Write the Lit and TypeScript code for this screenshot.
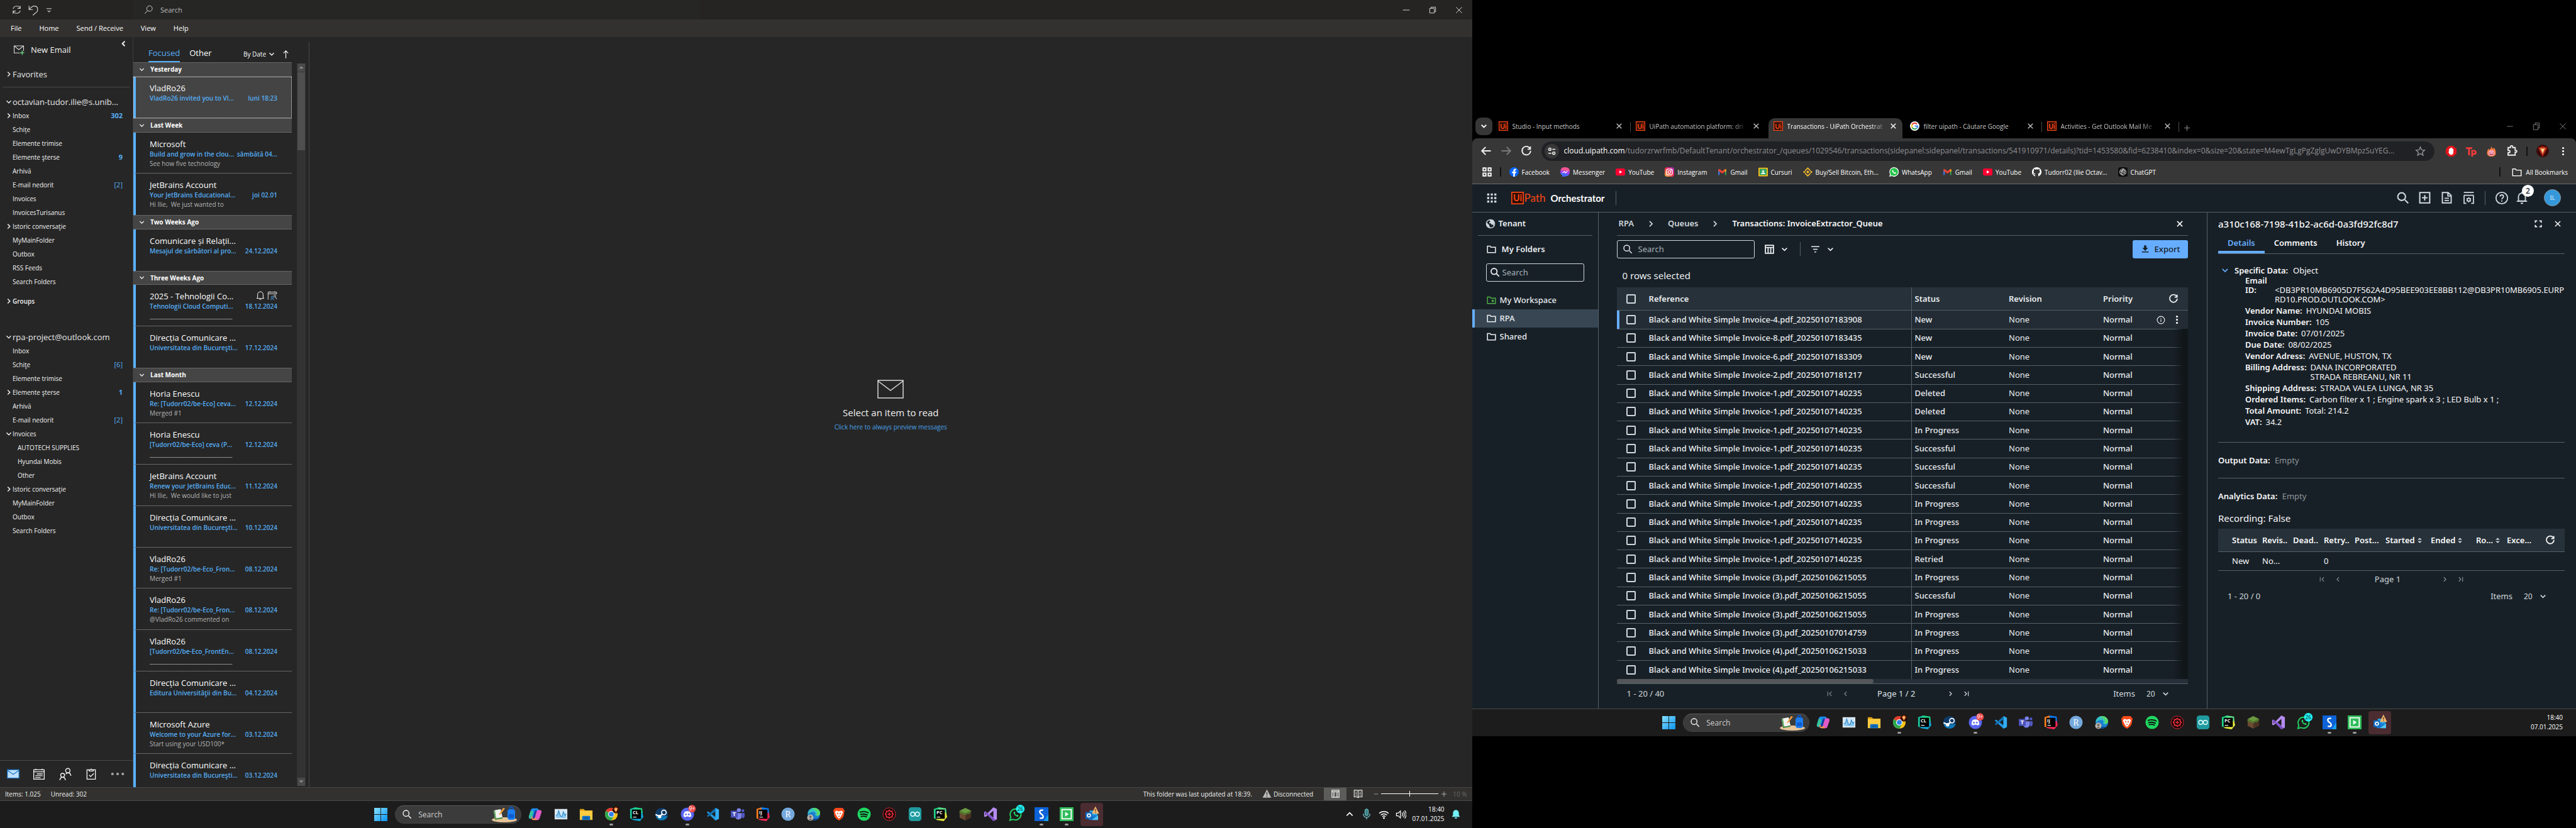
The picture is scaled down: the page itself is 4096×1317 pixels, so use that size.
import { LitElement, html, svg, css, nothing } from "lit";
import { customElement, property } from "lit/decorators.js";
import { classMap } from "lit/directives/class-map.js";

const ico = (body: unknown, size = 16, vb = "0 0 24 24") =>
  html`<svg class="ico" width=${size} height=${size} viewBox=${vb} fill="none" aria-hidden="true">${body}</svg>`;
const line = (d: string, size = 16, w = 2, vb = "0 0 24 24") =>
  ico(svg`<path d=${d} stroke="currentColor" stroke-width=${w}/>`, size, vb);
const solid = (d: string, size = 16) => ico(svg`<path d=${d} fill="currentColor" fill-rule="evenodd"/>`, size);

const DOWN = "M5 8.500l7 7 7-7";
const RIGHT = "M8.500 5l7 7-7 7";
const LEFT = "M15.500 5l-7 7 7 7";
const CROSS = "M5 5l14 14M19 5L5 19";
const LENS = "M16 16l6 6M10 3a7 7 0 1 0 0 14a7 7 0 0 0 0-14z";
const FOLDER = "M3 5h6l2 2.500h10v12H3z";
const RELOAD = "M19.500 6.500A9 9 0 1 0 21 12M20.500 2.500V8.500H14.500";

const reset = css`
  * { box-sizing: border-box; }
  button, input, select { font: inherit; color: inherit; background: none; border: 0; padding: 0; margin: 0; outline: 0; }
  a { color: inherit; text-decoration: none; }
  .ico { display: block; flex: none; }
  button { display: flex; align-items: center; justify-content: center; }
  ul, h1, h2, p, dl, dd { margin: 0; padding: 0; list-style: none; font-weight: inherit; font-size: inherit; }
`;

/* ---------- Taskbar ---------- */

const badgeAvatar = svg`<circle cx="20" cy="4.500" r="6" fill="#2a0d08"/><path d="M16 2.500l4-3 4 3-4 7z" fill="#e0641c"/><path d="M18 3l2-1.500L22 3l-2 4z" fill="#ffdc9a"/>`;
const jetbrains = (t: string, a: string, b: string, c: string) => svg`
  <path d="M1 3l9-3 3 8-6 14-6-3z" fill=${a}/><path d="M9 0l13 2 1 10-9 3z" fill=${b}/><path d="M4 17l18-8 2 8-6 7-12-2z" fill=${c}/>
  <rect x="4" y="4" width="16" height="16" fill="#000"/>
  <text x="5.500" y="12" font-size="8" font-weight="700" font-family="Open Sans, sans-serif" fill="#fff">${t}</text>
  <rect x="6" y="16.500" width="6" height="1.300" fill="#fff"/>`;

const apps: { name: string; art: unknown; dot?: boolean; active?: boolean }[] = [
  { name: "Copilot", art: svg`<path d="M8 2h7c2 0 2.500 1 3 2.500l1 3h-4c-1.500 0-2.300 1-2.800 2.500L9.500 18C9 19.500 8 20 6.500 20H3.500C1.500 20 .5 18 1.200 15.500L4.500 5C5 3 6 2 8 2z" fill="#1c8df0"/><path d="M1 15.500L4 6l5 1-3 13H3.500C1.500 20 .5 18 1 15.500z" fill="#35c39a"/><path d="M16 22H9c-2 0-2.500-1-3-2.500l-1-3h4c1.500 0 2.300-1 2.800-2.500L14.500 7C15 5.500 16 5 17.500 5h3c2 0 3 2 2.300 4.500L19.500 19c-.5 2-1.500 3-3.500 3z" fill="#e15ac8"/><path d="M6 19.500l-1-3h5l6 5.500H9c-2 0-2.500-1-3-2.500z" fill="#ff9248"/><path d="M10 10l2-5h3l-4 14-4 1z" fill="#173f9a"/>` },
  { name: "Resource monitor", art: svg`<rect x="1" y="3" width="22" height="18" fill="#e3e8ee"/><rect x="2.500" y="4.500" width="19" height="15" fill="#d2e8f7"/><path d="M3 18v-4l3-1 2-7 3 9 3 1 2-8 3 6 2-3v8z" fill="#8cc7ee"/><path d="M3 14l3-1 2-7 3 9 3 1 2-8 3 6 2-3" stroke="#2a86c9" stroke-width="1.200"/>` },
  { name: "File Explorer", art: svg`<path d="M1 3h7l2 2.500h13V9H1z" fill="#dd9c12"/><rect x="1" y="6" width="22" height="16" fill="#ffcc40"/><path d="M5 22v-5a2 2 0 0 1 2-2h10a2 2 0 0 1 2 2v5z" fill="#1273c4"/><rect x="8" y="18" width="8" height="1.500" fill="#0b4f91"/>` },
  { name: "Chrome", dot: true, art: svg`<circle cx="12" cy="12" r="11" fill="#fbc116"/><path d="M12 12L2.500 6.500A11 11 0 0 1 21.500 6.500H12z" fill="#e33b2e"/><path d="M12 12L2.500 6.500A11 11 0 0 0 12 23l5-8.500z" fill="#2da94f"/><circle cx="12" cy="12" r="5.500" fill="#fff"/><circle cx="12" cy="12" r="4.200" fill="#2f7de9"/>${badgeAvatar}` },
  { name: "CLion", art: jetbrains("CL", "#18c9a0", "#21d789", "#10a9d8") },
  { name: "Steam", art: svg`<circle cx="12" cy="12" r="11" fill="#0e3a68"/><path d="M1.500 15A11 11 0 0 0 22.500 15z" fill="#1276b5"/><circle cx="16" cy="9" r="4" stroke="#fff" stroke-width="1.800"/><circle cx="8.500" cy="16" r="3" fill="#fff"/><path d="M1.500 12.500L9 16l5-5" stroke="#fff" stroke-width="2.500"/>` },
  { name: "Discord", dot: true, art: svg`<circle cx="12" cy="12" r="11.500" fill="#5865f2"/><path d="M7.500 7.500q4.500-1.500 9 0 2.500 3.500 2.500 8l-3.500 2-1-1.500h-5l-1 1.500-3.500-2q0-4.500 2.500-8z" fill="#fff"/><circle cx="9.500" cy="12.500" r="1.500" fill="#5865f2"/><circle cx="14.500" cy="12.500" r="1.500" fill="#5865f2"/><circle cx="20" cy="2.500" r="6.500" fill="#ee4b4b"/><text x="20" y="5.500" text-anchor="middle" font-size="9" font-family="Open Sans, sans-serif" fill="#fff">9+</text>` },
  { name: "Visual Studio Code", art: svg`<path d="M17 1l6 3v16l-6 3L2 9l2-2 13 10z" fill="#2196e0"/><path d="M17 1l6 3v16l-6 3z" fill="#33adf5"/><path d="M17 1v6L4 17l-2-2z" fill="#1170b0"/>` },
  { name: "Teams", art: svg`<circle cx="14" cy="5" r="3.500" fill="#7b83eb"/><circle cx="21" cy="6" r="2.500" fill="#5059c9"/><path d="M8 10h11v7a6 6 0 0 1-11 1z" fill="#7b83eb"/><path d="M19 10h5v6q-1 3-4 3z" fill="#5059c9"/><rect x="0" y="6" width="12" height="12" rx="1" fill="#4b53bc"/><text x="6" y="15.500" text-anchor="middle" font-size="10" font-weight="700" font-family="Open Sans, sans-serif" fill="#fff">T</text>` },
  { name: "IntelliJ IDEA", art: jetbrains("IJ", "#fc801d", "#087cfa", "#fe2857") },
  { name: "R", art: svg`<circle cx="12" cy="12" r="11.500" fill="#75a9dc"/><text x="12" y="17.500" text-anchor="middle" font-size="15" font-family="Liberation Serif, serif" fill="#fff">R</text>` },
  { name: "Edge", art: svg`<circle cx="12" cy="12" r="11" fill="#1a7fd1"/><path d="M2 9C4 3 9 1 13 1c6 0 10 5 10 9 0 3-3 5-6 5s-3-2-2-4c0-2-2-3-4-3-4 0-8 2-9 5z" fill="#36c4c0"/><path d="M13 1c6 0 10 5 10 9 0 3-3 5-6 5 2-5 0-11-9-13z" fill="#57d96b"/><path d="M8 12c0 7 6 9 12 7-3 4-7 5-11 3s-4-6-1-10z" fill="#0d4d94"/><circle cx="6" cy="18" r="5.500" fill="#b9b4ae"/><circle cx="6" cy="16.500" r="2" fill="#6b625c"/><path d="M3 22q3-5 6 0z" fill="#6b625c"/>` },
  { name: "Brave", art: svg`<path d="M6 1h12l2 2 2 3-1 3c0 7-3 11-9 14C6 20 3 16 3 9L2 6l2-3z" fill="#fb4a1c"/><path d="M7 6l5 1 5-1 2 3-2 4-2 4-3 3-3-3-2-4-2-4z" fill="#fff"/><path d="M8 9l3 1-1 3zM16 9l-3 1 1 3zM10 15h4l-2 2z" fill="#fb4a1c"/>` },
  { name: "Spotify", art: svg`<circle cx="12" cy="12" r="11.500" fill="#1ed760"/><path d="M5 8.500q8-2.500 14 1M6 12.500q6.500-2 11.500 1M7 16q5-1.500 9 .8" stroke="#101010" stroke-width="2" stroke-linecap="round"/>` },
  { name: "Game launcher", art: svg`<circle cx="12" cy="12" r="11" fill="#160708" stroke="#e02a34" stroke-width="1"/><path d="M12 5l2 2 3 0 0 3 2 2-2 2 0 3-3 0-2 2-2-2-3 0 0-3-2-2 2-2 0-3 3 0z" stroke="#ee2f3a" stroke-width="1.800"/><path d="M12 9v6M9 12h6" stroke="#ee2f3a" stroke-width="1.500"/>` },
  { name: "Arduino", art: svg`<rect x="1" y="0" width="22" height="24" rx="5" fill="#1f9a9f"/><circle cx="8" cy="12" r="3.500" stroke="#e9ffff" stroke-width="1.500"/><circle cx="16" cy="12" r="3.500" stroke="#e9ffff" stroke-width="1.500"/>` },
  { name: "PyCharm", art: jetbrains("PC", "#21d789", "#5ee08a", "#e8ea3c") },
  { name: "Minecraft", art: svg`<path d="M12 1l10 5-10 5L2 6z" fill="#6a9a3f"/><path d="M2 6l10 5v12L2 18z" fill="#6b4a31"/><path d="M22 6l-10 5v12l10-5z" fill="#4a3122"/><path d="M2 6l10 5v3l-3-2-2 1-2-3-3 1zM22 6l-10 5v3l4-3 2 1 4-4z" fill="#4f7a2c"/>` },
  { name: "Visual Studio", art: svg`<path d="M17 0l6 3v18l-6 3L7 14l-4 3-2-1V8l2-1 4 3z" fill="#b58cf0"/><path d="M17 6v12l-7-6z" fill="#1c1c1c"/><path d="M3 10v4l2-2z" fill="#1c1c1c"/><path d="M1 8l2-1 18 15-4 2z" fill="#7d4fc9"/>` },
  { name: "WhatsApp", art: svg`<path d="M12 3a9.500 9.500 0 1 1-4.500 18L2 22.500 3.500 17A9.500 9.500 0 0 1 12 3z" stroke="#25d366" stroke-width="2"/><path d="M8.500 8q-1 3 2 6t6 2l.5-2-2.500-1-1 1q-2-1-3-3l1-1-1-2.500z" fill="#25d366"/><circle cx="20" cy="3" r="7.500" fill="#1ff4f4"/><text x="20" y="6.500" text-anchor="middle" font-size="9" font-family="Open Sans, sans-serif" fill="#10282c">26</text>` },
  { name: "Scribe", dot: true, art: svg`<rect x="0" y="0" width="24" height="24" fill="#0d63d8"/><path d="M16 24l8-12v12z" fill="#16a0f0"/><path d="M15 5H12a3 3 0 0 0-3 3q0 2 3 4t3 4a3 3 0 0 1-3 3H9" stroke="#fff" stroke-width="2.600"/>` },
  { name: "UiPath Assistant", dot: true, art: svg`<rect x="0" y="0" width="24" height="24" fill="#2ebd59"/><rect x="4" y="4" width="16" height="16" stroke="#fff" stroke-width="2"/><path d="M9.500 8l6 4-6 4z" fill="#fff"/>` },
  { name: "Outlook", active: true, art: svg`<rect x="8" y="5" width="15" height="12" fill="#28a8ea"/><path d="M6 14h18v9H6z" fill="#1a7ad0"/><path d="M24 14L12 23h12z" fill="#50c3f5"/><rect x="0" y="8" width="13" height="13" rx="1" fill="#0f6cc4"/><circle cx="6.500" cy="14.500" r="3" stroke="#fff" stroke-width="2"/><path d="M19-3l7 14H12z" fill="#f3b56b"/><path d="M19 2v5M19 8.500v1" stroke="#4a3320" stroke-width="1.500"/>` },
];

@customElement("task-bar")
class TaskBar extends LitElement {
  @property({ type: Boolean }) tray = false;

  static styles = [reset, css`
    :host { display: grid; grid-template-columns: 1fr auto 1fr; height: 44px; background: #1c1c1c; border-top: 1px solid #474747; font: 10px/15px "Open Sans", sans-serif; color: #fff; }
    .group { display: flex; align-items: center; padding-left: 9px; grid-column: 2; }
    .start { margin-right: 12px; }
    .search { display: flex; align-items: center; gap: 10px; width: 201px; height: 29px; border-radius: 15px; background: #3b3b3b; border: 1px solid #434343; border-top-color: #5c5c5c; padding: 0 5px 0 10px; margin-right: 4px; }
    .search input { flex: 1; min-width: 0; font-size: 12px; color: #fff; }
    .search input::placeholder { color: #cfcfcf; opacity: 1; }
    .apps { display: flex; justify-content: space-between; width: 921px; }
    .app { position: relative; width: 36px; height: 37px; border-radius: 4px; }
    .app .ico { overflow: visible; }
    .active { background: #4a2c31; }
    .dot::after { content: ""; position: absolute; bottom: 1px; left: 15px; width: 6px; height: 3px; border-radius: 2px; background: #9a9a9a; }
    .tray { display: flex; align-items: center; justify-content: flex-end; padding-right: 21px; gap: 12px; }
    .full { padding-right: 18px; gap: 10px; }
    .clock { text-align: right; }
  `];

  render() {
    return html`
      <div class="group">
        <button class="start" aria-label="Start">${ico(svg`<defs><linearGradient id="w" x1="0" y1="0" x2="1" y2="1" ><stop stop-color="#86e0ff"/><stop offset="1" stop-color="#0a94f2"/></linearGradient></defs><path d="M0 0h11.500v11.500H0zM12.500 0H24v11.500H12.500zM0 12.500h11.500V24H0zM12.500 12.500H24V24H12.500z" fill="url(#w)"/>`, 21)}</button>
        <label class="search">
          ${line(LENS, 16, 2)}
          <input type="search" placeholder="Search" aria-label="Search" />
          ${html`<svg class="ico" width="42" height="26" viewBox="0 0 42 26" aria-hidden="true"><ellipse cx="21" cy="22" rx="20" ry="4" fill="#e8c598"/><path d="M4 7l11-2 3 13-12 2z" fill="#f2f2ee"/><path d="M4 7l2 13 2 0-2-13z" fill="#55a552"/><path d="M6 20l12-2v2l-12 2z" fill="#3f8a44"/><path d="M12 14l7-11 3 1-8 10z" fill="#f2a03d"/><rect x="26" y="5" width="12" height="17" rx="4" fill="#1b7df0"/><path d="M29 6q0-4 3-4t3 4" stroke="#0b57c4" stroke-width="2" fill="none"/><rect x="28" y="13" width="8" height="6" rx="1" fill="#0c5bd0"/></svg>`}
        </label>
        <div class="apps">
          ${apps.map((a) => html`<button class=${classMap({ app: true, dot: !!a.dot, active: !!a.active })} aria-label=${a.name}>${ico(a.art, a.name === "Outlook" ? 20 : 22)}</button>`)}
        </div>
      </div>
      <div class=${classMap({ tray: true, full: this.tray })}>
        ${this.tray ? html`
          ${line("M5 15.500l7-7 7 7", 16, 2.5)}
          ${ico(svg`<rect x="8.500" y="1" width="7" height="14" rx="3.500" fill="#3a7f85" stroke="#7fe3ea" stroke-width="1.200"/><path d="M5 11v1a7 7 0 0 0 14 0v-1M12 19v4" stroke="#7fe3ea" stroke-width="1.500"/>`, 18)}
          ${ico(svg`<path d="M1.500 9.500a15 15 0 0 1 21 0M5 13.500a10 10 0 0 1 14 0M8.500 17a5 5 0 0 1 7 0" stroke="#fff" stroke-width="2"/><circle cx="12" cy="20" r="2" fill="#fff"/>`, 17)}
          ${line("M2 9v6h4l5 5V4L6 9zM14.500 8q3 4 0 8M17.500 5.500q5 6.500 0 13M20.500 3q7 9 0 18", 17, 1.7)}` : nothing}
        <time class="clock">18:40<br />07.01.2025</time>
        ${this.tray ? ico(svg`<path d="M12 2a7 7 0 0 0-7 7v5l-2.500 4.500h19L19 14V9a7 7 0 0 0-7-7zM9 20a3 3 0 0 0 6 0z" fill="#74f0f7"/>`, 16) : nothing}
      </div>`;
  }
}

/* ---------- Outlook ---------- */

type Folder = { name: string; count?: string; bold?: boolean; open?: boolean; closed?: boolean; child?: boolean };
const boxA: Folder[] = [
  { name: "Inbox", count: "302", bold: true, closed: true }, { name: "Schițe" }, { name: "Elemente trimise" },
  { name: "Elemente şterse", count: "9", bold: true }, { name: "Arhivă" }, { name: "E-mail nedorit", count: "[2]" },
  { name: "Invoices" }, { name: "InvoicesTurisanus" }, { name: "Istoric conversaţie", closed: true },
  { name: "MyMainFolder" }, { name: "Outbox" }, { name: "RSS Feeds" }, { name: "Search Folders" },
];
const boxB: Folder[] = [
  { name: "Inbox" }, { name: "Schiţe", count: "[6]" }, { name: "Elemente trimise" },
  { name: "Elemente şterse", count: "1", bold: true, closed: true }, { name: "Arhivă" }, { name: "E-mail nedorit", count: "[2]" },
  { name: "Invoices", open: true }, { name: "AUTOTECH SUPPLIES", child: true }, { name: "Hyundai Mobis", child: true },
  { name: "Other", child: true }, { name: "Istoric conversaţie", closed: true }, { name: "MyMainFolder" },
  { name: "Outbox" }, { name: "Search Folders" },
];

const RULE = "_".repeat(30);
type Mail = { from: string; subject: string; date: string; preview?: string; meeting?: boolean; selected?: boolean; cut?: boolean };
const groups: { title: string; mails: Mail[] }[] = [
  { title: "Yesterday", mails: [{ from: "VladRo26", subject: "VladRo26 invited you to Vl...", date: "luni 18:23", selected: true }] },
  { title: "Last Week", mails: [
    { from: "Microsoft", subject: "Build and grow in the clou...", date: "sâmbătă 04...", preview: "See how five technology" },
    { from: "JetBrains Account", subject: "Your JetBrains Educational...", date: "joi 02.01", preview: "Hi Ilie,  We just wanted to" }] },
  { title: "Two Weeks Ago", mails: [{ from: "Comunicare și Relații...", subject: "Mesajul de sărbători al pro...", date: "24.12.2024" }] },
  { title: "Three Weeks Ago", mails: [
    { from: "2025 - Tehnologii Co...", subject: "Tehnologii Cloud Computi...", date: "18.12.2024", preview: RULE, meeting: true },
    { from: "Direcția Comunicare ...", subject: "Universitatea din Bucureşti...", date: "17.12.2024" }] },
  { title: "Last Month", mails: [
    { from: "Horia Enescu", subject: "Re: [Tudorr02/be-Eco] ceva...", date: "12.12.2024", preview: "Merged #1" },
    { from: "Horia Enescu", subject: "[Tudorr02/be-Eco] ceva (P...", date: "12.12.2024", preview: RULE },
    { from: "JetBrains Account", subject: "Renew your JetBrains Educ...", date: "11.12.2024", preview: "Hi Ilie,  We would like to just" },
    { from: "Direcția Comunicare ...", subject: "Universitatea din Bucureşti...", date: "10.12.2024" },
    { from: "VladRo26", subject: "Re: [Tudorr02/be-Eco_Fron...", date: "08.12.2024", preview: "Merged #1" },
    { from: "VladRo26", subject: "Re: [Tudorr02/be-Eco_Fron...", date: "08.12.2024", preview: "@VladRo26 commented on" },
    { from: "VladRo26", subject: "[Tudorr02/be-Eco_FrontEn...", date: "08.12.2024", preview: RULE },
    { from: "Direcția Comunicare ...", subject: "Editura Universităţii din Bu...", date: "04.12.2024" },
    { from: "Microsoft Azure", subject: "Welcome to your Azure for...", date: "03.12.2024", preview: "Start using your USD100*" },
    { from: "Direcția Comunicare ...", subject: "Universitatea din Bucureşti...", date: "03.12.2024", cut: true }] },
];

@customElement("outlook-window")
class OutlookWindow extends LitElement {
  static styles = [reset, css`
    :host { display: flex; flex-direction: column; min-height: 0; background: #262626; color: #fff; font: 10px/14px "Open Sans", sans-serif; }
    .title { display: flex; align-items: center; height: 31px; background: #252423; color: #d0d0d0; padding: 0 13px 0 18px; }
    .quick { display: flex; align-items: center; gap: 9px; width: 194px; }
    .find { display: flex; align-items: center; gap: 11px; height: 31px; width: 900px; background: #262625; padding-left: 17px; }
    .find input { font-size: 11px; color: #d0d0d0; }
    .find input::placeholder { color: #bdbdbd; opacity: 1; }
    .win { display: flex; gap: 26px; margin-left: auto; }
    .menu { display: flex; align-items: center; gap: 28px; height: 28px; background: #32312f; padding-left: 17px; font-size: 11px; }
    .body { display: flex; flex: 1; min-height: 0; }
    .nav { display: flex; flex-direction: column; width: 212px; border-right: 1px solid #3d3d3d; color: #f3f3f3; }
    .new { display: flex; align-items: center; justify-content: flex-start; gap: 10px; height: 40px; padding: 0 8px 0 21px; font-size: 13px; }
    .collapse { margin: -20px 0 0 auto; }
    .head { display: flex; align-items: center; font-size: 13px; height: 22px; padding-left: 8px; color: #e6e6e6; }
    .fav { margin-top: 8px; }
    .rule { height: 1px; background: #484848; margin: 9px 5px 12px; }
    .row { display: flex; align-items: center; height: 22px; padding: 0 16px 0 8px; }
    .child { padding-left: 16px; }
    .slot { width: 12px; flex: none; }
    .count { margin-left: auto; color: #55aef5; font-size: 11px; }
    .bold { font-weight: 700; }
    .groups { margin: 9px 0 35px; font-weight: 600; }
    .bottom { display: flex; align-items: center; justify-content: space-between; height: 43px; margin-top: auto; border-top: 1px solid #4a4a4a; padding: 0 13px 0 11px; }
    .list { display: flex; flex-direction: column; width: 252px; }
    .tabs { display: flex; align-items: flex-end; gap: 15px; height: 40px; padding: 0 2px 0 24px; font-size: 13px; }
    .tab { height: 28px; border-bottom: 2px solid transparent; line-height: 16px; align-items: center; }
    .on { color: #55aef5; border-color: #55aef5; }
    .order { display: flex; align-items: center; gap: 9px; height: 26px; margin-left: auto; }
    .sort { gap: 3px; font-size: 10px; }
    .mails { display: flex; flex-direction: column; flex: 1; min-height: 0; }
    .group { display: flex; align-items: center; gap: 8px; flex: 0 1 23px; min-height: 0; background: #454545; border-top: 1px solid #666; border-bottom: 1px solid #666; padding-left: 8px; font-weight: 700; }
    .mail { display: grid; grid-template-columns: 137px 1fr; grid-template-rows: 18px 15px 14px; flex: 0 1 66px; min-height: 0; overflow: hidden; padding: 9px 23px 0 22px; border-left: 4px solid #58b0fb; border-bottom: 1px solid #666; }
    .mail.last { border-bottom: 0; }
    .cut { flex-basis: 53px; border-bottom: 0; }
    .selected { background: #444; outline: 1px dotted #e0e0e0; outline-offset: -1px; }
    .from { font-size: 13px; line-height: 18px; white-space: nowrap; }
    .flags { display: flex; justify-content: flex-end; gap: 3px; }
    .subject, .date { color: #55aef5; font-weight: 600; white-space: nowrap; }
    .date { text-align: right; }
    .preview { color: #b4b4b4; white-space: pre; }
    .scroll { display: flex; flex-direction: column; width: 14px; margin: 42px 5px 2px 8px; background: #333; }
    .arrow { height: 13px; margin: 0 1px; background: #4a4a4a; color: #8f8f8f; }
    .thumb { height: 124px; margin: 1px 1px auto; background: #4f4f4f; }
    .read { display: flex; flex: 1; flex-direction: column; align-items: center; justify-content: center; border-left: 1px solid #484848; margin-top: 8px; padding-bottom: 29px; }
    .read h2 { font-size: 15px; line-height: 20px; margin-top: 12px; color: #f0f0f0; }
    .read a { color: #49a3ea; margin-top: 6px; }
    .status { display: flex; align-items: center; height: 21px; background: #32312f; border-top: 1px solid #444; padding: 0 8px; color: #f0f0f0; }
    .status > span { margin-right: 16px; }
    .status > .fresh { margin: 0 16px 0 auto; }
    .offline { display: flex; align-items: center; gap: 3px; margin-right: 17px; }
    .view { width: 36px; height: 20px; }
    .lit { background: #5c5c5a; }
    .zoom { display: flex; align-items: center; gap: 3px; margin-left: 6px; color: #aaa; }
    .zoom input { appearance: none; width: 91px; height: 11px; background: linear-gradient(#fff, #fff) center / 100% 1px no-repeat; }
    .zoom input::-webkit-slider-thumb { appearance: none; width: 1px; height: 9px; background: #fff; }
    .pct { color: #666; margin-left: 5px; }
  `];

  folder(f: Folder) {
    return html`<a href="#" class=${classMap({ row: true, child: !!f.child })}>
      <span class="slot">${f.closed ? line(RIGHT, 12, 3) : f.open ? line(DOWN, 12, 3) : nothing}</span>
      <span>${f.name}</span>
      ${f.count ? html`<span class=${classMap({ count: true, bold: !!f.bold })}>${f.count}</span>` : nothing}
    </a>`;
  }

  mail(m: Mail, last: boolean) {
    return html`<article class=${classMap({ mail: true, selected: !!m.selected, cut: !!m.cut, last })}>
      <span class="from">${m.from}</span>
      <span class="flags">${m.meeting ? html`
        ${line("M12 3a6.500 6.500 0 0 0-6.500 6.500v7L3.500 19h17l-2-2.500v-7A6.500 6.500 0 0 0 12 3zM10 21.500h4", 16, 1.5)}
        ${ico(svg`<path d="M2 22V4h20v5M2 8h20M6 2v3M18 2v3" stroke="#ddd" stroke-width="1.500"/><circle cx="18" cy="13" r="2.300" stroke="#ddd" stroke-width="1.300"/><circle cx="12" cy="16" r="2.500" stroke="#49a3ea" stroke-width="1.500"/><path d="M8 23q4-8 8 0" stroke="#49a3ea" stroke-width="1.500"/><path d="M18 16q4 0 4 5" stroke="#ddd" stroke-width="1.300"/>`, 16)}` : nothing}</span>
      <span class="subject">${m.subject}</span><span class="date">${m.date}</span>
      <span class="preview">${m.preview ?? ""}</span>
    </article>`;
  }

  render() {
    return html`
      <header class="title">
        <div class="quick">
          ${line("M4 10a8.500 8.500 0 0 1 16-1M20 3v6h-6M20 14a8.500 8.500 0 0 1-16 1M4 21v-6h6", 17, 1.6)}
          ${line("M3 3v8h8M3.500 11Q9 3 15 3.500t6 6.500-3 7l-7 6", 18, 1.6)}
          ${line("M5 8h14M8 13l4 4 4-4", 14, 1.8)}
        </div>
        <label class="find">${line("M14 2a7 7 0 1 0 0 14a7 7 0 0 0 0-14zM9 14l-7 8", 15, 1.6)}<input type="search" placeholder="Search" aria-label="Search" /></label>
        <div class="win">
          <button aria-label="Minimize">${line("M4 12h16", 16, 1.5)}</button>
          <button aria-label="Restore">${line("M5 8h11v11H5zM8 8V5h11v11h-3", 16, 1.5)}</button>
          <button aria-label="Close">${line(CROSS, 16, 1.5)}</button>
        </div>
      </header>
      <nav class="menu">${["File", "Home", "Send / Receive", "View", "Help"].map((t) => html`<button>${t}</button>`)}</nav>
      <div class="body">
        <nav class="nav">
          <button class="new">${ico(svg`<path d="M2 4h20v11M14 19H2V4l10 8L22 4" stroke="#ddd" stroke-width="1.400"/><path d="M19 14v9M14.500 18.500h9" stroke="#6fdc8c" stroke-width="1.800"/>`, 18)}New Email<span class="collapse">${line(LEFT, 13, 3.5)}</span></button>
          <div class="head fav">${line(RIGHT, 12, 3)}Favorites</div>
          <div class="rule"></div>
          <div class="head">${line(DOWN, 12, 3)}octavian-tudor.ilie@s.unib...</div>
          ${boxA.map((f) => this.folder(f))}
          <div class="groups">${this.folder({ name: "Groups", closed: true })}</div>
          <div class="head">${line(DOWN, 12, 3)}rpa-project@outlook.com</div>
          ${boxB.map((f) => this.folder(f))}
          <div class="bottom">
            <button aria-label="Mail">${ico(svg`<rect x="1" y="4" width="22" height="16" fill="#bfdff8" stroke="#1a77c9" stroke-width="1.500"/><path d="M1 5l11 8 11-8" stroke="#1a77c9" stroke-width="1.500"/>`, 20)}</button>
            <button aria-label="Calendar">${line("M2 4h20v18H2zM2 8h20M6 2v3M18 2v3M8 12h11M5 15.500h14M5 19h10", 20, 1.6)}</button>
            <button aria-label="People">${line("M7.500 11.500a3.500 3.500 0 1 0 0 7a3.500 3.500 0 1 0 0-7M2.500 24q.5-5.500 5-5.500t5 5.500M17 2.500a4 4 0 1 0 0 8a4 4 0 1 0 0-8M13 13q2-2.500 4-2.500 5 0 5.500 5.500", 21, 1.6)}</button>
            <button aria-label="Tasks">${line("M9 4H4v18h16V4h-5M8 6.500V4h2.500q1.500-3 3 0H16v2.500zM8 14l3 3 6-6", 20, 1.6)}</button>
            <button aria-label="More">${ico(svg`<circle cx="3" cy="12" r="2.300" fill="#a8a8a8"/><circle cx="12" cy="12" r="2.300" fill="#a8a8a8"/><circle cx="21" cy="12" r="2.300" fill="#a8a8a8"/>`, 22)}</button>
          </div>
        </nav>
        <section class="list">
          <div class="tabs">
            <button class="tab on">Focused</button><button class="tab">Other</button>
            <div class="order"><button class="sort">By Date ${line(DOWN, 12, 2.5)}</button><button aria-label="Sort order">${line("M12 22V3M6 9l6-6 6 6", 15, 1.8)}</button></div>
          </div>
          <div class="mails">
            ${groups.map((g) => html`<h2 class="group">${line(DOWN, 11, 2.8)}${g.title}</h2>${g.mails.map((m, i) => this.mail(m, i === g.mails.length - 1))}`)}
          </div>
        </section>
        <div class="scroll">
          <div class="arrow">${ico(svg`<path d="M5 16h14l-7-7z" fill="currentColor"/>`, 12)}</div>
          <div class="thumb"></div>
          <div class="arrow">${ico(svg`<path d="M5 9h14l-7 7z" fill="currentColor"/>`, 12)}</div>
        </div>
        <main class="read">
          <svg class="ico" width="42" height="30" viewBox="0 0 42 30" fill="none" stroke="#d8d8d8" stroke-width="1.500" aria-hidden="true"><path d="M1 1h40v28H1zM1 2l20 15L41 2"/></svg>
          <h2>Select an item to read</h2>
          <a href="#">Click here to always preview messages</a>
        </main>
      </div>
      <footer class="status">
        <span>Items: 1.025</span><span>Unread: 302</span>
        <span class="fresh">This folder was last updated at 18:39.</span>
        <div class="offline">${ico(svg`<path d="M12 1l11 21H1z" fill="#bbb"/><path d="M12 8v7M12 17v3" stroke="#32312f" stroke-width="2"/>`, 15)}Disconnected</div>
        <button class="view lit" aria-label="Normal view">${line("M3 3h18v18H3zM3 7h18M8 7v14M16 7v14", 15, 2)}</button>
        <button class="view" aria-label="Reading view">${line("M12 4v18M2 3h8l2 2 2-2h8v17h-8l-2 2-2-2H2zM5 8h4M5 12h4M5 16h4M15 8h4M15 12h4M15 16h4", 15, 1.8)}</button>
        <div class="zoom">${line("M4 12h16", 10, 2)}<input type="range" aria-label="Zoom" />${line("M4 12h16M12 4v16", 12, 2)}<span class="pct">10 %</span></div>
      </footer>
      <task-bar tray></task-bar>`;
  }
}

/* ---------- Browser ---------- */

const uiFav = svg`<rect x="1" y="1" width="22" height="22" fill="#2a0d05" stroke="#fa4616" stroke-width="2"/><text x="12" y="18.500" text-anchor="middle" font-size="17" font-family="Lato, sans-serif" font-weight="700" fill="#fa4616">Ui</text>`;
const googleFav = svg`<circle cx="12" cy="12" r="12" fill="#fff"/><path d="M18 7.500A7.500 7.500 0 0 0 5.500 8.500" stroke="#ea4335" stroke-width="3.300"/><path d="M5.500 8.500a7.500 7.500 0 0 0 0 7" stroke="#fbbc05" stroke-width="3.300"/><path d="M5.500 15.500a7.500 7.500 0 0 0 11.500 2" stroke="#34a853" stroke-width="3.300"/><path d="M17 17.500q2.500-2 2.500-5.500H12" stroke="#4285f4" stroke-width="3.300"/>`;
const gmail = svg`<path d="M2 20V6l3 2v12z" fill="#4285f4"/><path d="M22 20V6l-3 2v12z" fill="#34a853"/><path d="M2 6q1-3 4-1l6 5 6-5q3-2 4 1v3L12 16 2 9z" fill="#ea4335"/><path d="M19 5q3 0 3 2v3l-3 2z" fill="#fbbc04"/>`;
const youtube = svg`<rect x="0" y="3" width="24" height="18" rx="4" fill="#ff0033"/><path d="M9.500 8l7 4-7 4z" fill="#fff"/>`;

const browserTabs = [
  { title: "Studio - Input methods", art: uiFav },
  { title: "UiPath automation platform: dri", art: uiFav, fade: true },
  { title: "Transactions - UiPath Orchestrat", art: uiFav, active: true, fade: true },
  { title: "filter uipath - Căutare Google", art: googleFav },
  { title: "Activities - Get Outlook Mail Me", art: uiFav, fade: true },
];

const bookmarks = [
  { t: "Facebook", a: svg`<circle cx="12" cy="12" r="12" fill="#0866ff"/><path d="M10 24v-9H7v-4h3V9q0-5 5-5h2.500v3.500H16q-2 0-2 2V11h3.500l-.6 4H14v9z" fill="#fff"/>` },
  { t: "Messenger", a: svg`<path d="M12 0q12 0 12 11.500T12 23l-3 0-4 1.500V20Q0 17 0 11.500 0 0 12 0z" fill="#a040f0"/><path d="M1 8Q3 0 12 0q11 0 12 10z" fill="#f2568f"/><path d="M0 14q2 6 5 6v4l4-1q9 1 12-5z" fill="#3d6bfa"/><path d="M5 15l5-5 4 3 5-4-5 6-4-3z" fill="#fff" stroke="#fff"/>` },
  { t: "YouTube", a: youtube },
  { t: "Instagram", a: svg`<defs><linearGradient id="ig" x1="0" y1="1" x2="1" y2="0"><stop stop-color="#fdc33d"/><stop offset=".5" stop-color="#f5284b"/><stop offset="1" stop-color="#a22bd0"/></linearGradient></defs><rect width="24" height="24" rx="6" fill="url(#ig)"/><rect x="4.500" y="4.500" width="15" height="15" rx="4.500" stroke="#fff" stroke-width="2"/><circle cx="12" cy="12" r="3.500" stroke="#fff" stroke-width="2"/><circle cx="16.500" cy="7.500" r="1.200" fill="#fff"/>` },
  { t: "Gmail", a: gmail },
  { t: "Cursuri", a: svg`<rect x="0" y="1" width="24" height="22" rx="2" fill="#f6bb17"/><rect x="3" y="4" width="18" height="16" fill="#2fa463"/><circle cx="12" cy="10" r="2.500" fill="#fff"/><path d="M6 17q1-4 6-4t6 4z" fill="#fff"/>` },
  { t: "Buy/Sell Bitcoin, Eth...", a: svg`<path d="M12 0l5 5-2 2-3-3-3 3-2-2zM12 24l5-5-2-2-3 3-3-3-2 2zM0 12l3-3 3 3-3 3zM24 12l-3-3-3 3 3 3zM12 8l4 4-4 4-4-4zM5 7l2-2 2 2-4 4zM19 7l-2-2-2 2 4 4zM5 17l2 2 2-2-4-4zM19 17l-2 2-2-2 4-4z" fill="#f3ba2f"/>` },
  { t: "WhatsApp", a: svg`<path d="M12 0a12 12 0 1 1-5.500 22.500L0 24l2-6A12 12 0 0 1 12 0z" fill="#fff"/><path d="M12 2a10 10 0 1 1-5 18.500L3 21.500 4 18A10 10 0 0 1 12 2z" fill="#25c34a"/><path d="M8 7q-2 3 2 7t7 2l.5-2-3-1.500-1 1.500q-2-1-3.500-3.500l1-1L9.500 7z" fill="#fff"/>` },
  { t: "Gmail", a: gmail },
  { t: "YouTube", a: youtube },
  { t: "Tudorr02 (Ilie Octav...", a: svg`<path d="M12 0a12 12 0 0 0-4 23.400v-4q-3 .6-4-1.800c-.5-1-1-1.400-1.500-1.800 1.500-.5 2.500 1.500 3.500 2 1 .4 1.700.2 2.200 0q.2-1 .8-1.500C5.500 16 4 14 4 11q0-2 1.200-3.200-.5-1.500.1-3.300 1.500 0 3.300 1.300 3.400-.9 6.800 0 1.800-1.300 3.300-1.300.6 1.800.1 3.300Q20 9 20 11c0 3-1.500 5-5 5.300q1 .8 1 2.500v4.600A12 12 0 0 0 12 0z" fill="#fff"/>` },
  { t: "ChatGPT", a: svg`<rect width="24" height="24" rx="5" fill="#0d0d0d"/><circle cx="12" cy="12" r="8" stroke="#eee" stroke-width="1.300"/><path d="M12 4v9l-7 4M5 8l7 4 7 4M12 20l-4-3V9l7-4M16 7v8l-7 4M6 11l7-4 6 4" stroke="#eee" stroke-width="1.200"/>` },
];

const refs: [string, string][] = [
  ["Invoice-4.pdf_20250107183908", "New"], ["Invoice-8.pdf_20250107183435", "New"], ["Invoice-6.pdf_20250107183309", "New"],
  ["Invoice-2.pdf_20250107181217", "Successful"], ["Invoice-1.pdf_20250107140235", "Deleted"], ["Invoice-1.pdf_20250107140235", "Deleted"],
  ["Invoice-1.pdf_20250107140235", "In Progress"], ["Invoice-1.pdf_20250107140235", "Successful"], ["Invoice-1.pdf_20250107140235", "Successful"],
  ["Invoice-1.pdf_20250107140235", "Successful"], ["Invoice-1.pdf_20250107140235", "In Progress"], ["Invoice-1.pdf_20250107140235", "In Progress"],
  ["Invoice-1.pdf_20250107140235", "In Progress"], ["Invoice-1.pdf_20250107140235", "Retried"], ["Invoice (3).pdf_20250106215055", "In Progress"],
  ["Invoice (3).pdf_20250106215055", "Successful"], ["Invoice (3).pdf_20250106215055", "In Progress"], ["Invoice (3).pdf_20250107014759", "In Progress"],
  ["Invoice (4).pdf_20250106215033", "In Progress"], ["Invoice (4).pdf_20250106215033", "In Progress"],
];

const facts: [string, unknown][] = [
  ["Vendor Name:", "HYUNDAI MOBIS"], ["Invoice Number:", "105"], ["Invoice Date:", "07/01/2025"], ["Due Date:", "08/02/2025"],
  ["Vendor Adress:", "AVENUE, HUSTON, TX"], ["Billing Address:", html`DANA INCORPORATED<br />STRADA REBREANU, NR 11`],
  ["Shipping Address:", "STRADA VALEA LUNGA, NR 35"], ["Ordered Items:", "Carbon filter x 1 ; Engine spark x 3 ; LED Bulb x 1 ;"],
  ["Total Amount:", "Total: 214.2"], ["VAT:", "34.2"],
];

@customElement("browser-window")
class BrowserWindow extends LitElement {
  static styles = [reset, css`
    :host { display: flex; flex-direction: column; min-height: 0; background: #000; color: #e9edf0; font: 10px/14px "Open Sans", sans-serif; }
    .strip { display: flex; align-items: flex-end; height: 37px; padding-left: 5px; color: #c4c4c4; }
    .pick { width: 27px; height: 28px; border-radius: 9px; background: #373737; color: #fff; margin: 0 3px 5px 0; }
    .tab { display: flex; align-items: center; gap: 7px; position: relative; width: 218px; height: 32px; padding: 0 13px 6px 7px; }
    .tab.active { background: #373737; border-radius: 10px 10px 0 0; color: #fff; padding-left: 8px; width: 213px; margin-right: 5px; padding-right: 8px; }
    .tab.split::after { content: ""; position: absolute; right: 1px; top: 6px; height: 16px; width: 1px; background: #4a4a4a; }
    .tab button { margin-left: auto; }
    .name { white-space: nowrap; }
    .fade { -webkit-mask-image: linear-gradient(90deg, #000 88%, rgba(0, 0, 0, 0.3)); mask-image: linear-gradient(90deg, #000 88%, rgba(0, 0, 0, 0.3)); }
    .add { margin: 0 0 11px 6px; color: #888; }
    .win { display: flex; gap: 26px; margin: 0 13px 11px auto; color: #8a8a8a; }
    .chrome { background: #373737; border-radius: 8px 8px 0 0; border-bottom: 1px solid #6b6b6b; height: 73px; padding-top: 5px; }
    .bar { display: flex; align-items: center; height: 31px; padding: 0 13px 0 13px; color: #f0f0f0; }
    .moves { display: flex; gap: 14px; width: 97px; }
    .dim { color: #7a7a7a; }
    .url { display: flex; flex: 1; align-items: center; gap: 8px; height: 31px; border-radius: 16px; background: #202124; padding: 0 14px 0 5px; font-size: 12px; color: #8f9094; min-width: 0; white-space: nowrap; }
    .site { width: 23px; height: 23px; border-radius: 50%; background: #373737; color: #eee; }
    .addr { flex: 1; min-width: 0; overflow: hidden; }
    .addr b { color: #fff; font-weight: 400; }
    .exts { display: flex; align-items: center; gap: 15px; margin-left: 18px; }
    .sep { width: 2px; height: 15px; background: #111; margin: 0 -1px; }
    .marks { display: flex; align-items: center; gap: 17px; height: 36px; padding: 0 13px 0 16px; color: #fff; }
    .marks a { display: flex; align-items: center; gap: 5px; }
    .marks .sep { margin: 0 -4px; }
    .marks .all { margin: 0 0 0 auto; }

    .app { display: flex; flex-direction: column; flex: 1; min-height: 0; background: #182027; font: 13px/15px "Noto Sans", sans-serif; font-weight: 500; }
    .top { display: flex; align-items: center; height: 45px; border-bottom: 1px solid #526069; padding: 0 24px 0 23px; color: #cfd8dd; }
    .brand { display: flex; align-items: center; margin-left: 23px; font: 700 15px/20px Lato, sans-serif; color: #fff; }
    .path { color: #fa4616; font-weight: 400; font-size: 17px; margin: 0 8px 0 1px; }
    .bar1 { width: 1px; height: 22px; background: #526069; margin-left: 18px; }
    .tools { display: flex; align-items: center; gap: 14px; margin-left: auto; }
    .tools .bar1 { margin: 0 1px; }
    .bell { position: relative; margin: 0 10px 0 -4px; }
    .badge { position: absolute; left: 11px; top: -10px; width: 19px; height: 19px; border-radius: 50%; background: #fff; color: #182027; font-size: 12px; line-height: 19px; text-align: center; }
    .me { width: 27px; height: 27px; border-radius: 50%; background: #3498db; font-size: 9px; color: #cfe6f7; border: 1px solid #8b9aa5; }
    .work { display: flex; flex: 1; min-height: 0; }

    .side { width: 201px; border-right: 1px solid #526069; }
    .tenant { display: flex; align-items: center; gap: 5px; height: 37px; margin: 0 9px; padding-left: 12px; border-bottom: 1px solid #526069; font-weight: 600; }
    .mine { display: flex; align-items: center; gap: 8px; height: 44px; padding-left: 22px; font-weight: 600; }
    .field { display: flex; align-items: center; border: 1px solid #cfd8dd; border-radius: 3px; height: 29px; }
    .field input { flex: 1; min-width: 0; font-weight: 400; }
    .field input::placeholder { color: #a4b1b8; opacity: 1; }
    .side .field { margin: 0 22px 15px; padding: 0 5px; gap: 4px; }
    .item { display: flex; align-items: center; gap: 5px; height: 29px; padding-left: 18px; border-left: 4px solid transparent; }
    .cur { background: #374652; border-color: #66adff; }

    .main { display: flex; flex: 1; flex-direction: column; min-width: 0; padding: 0 30px 0 29px; }
    .crumbs { display: flex; align-items: center; gap: 20px; height: 37px; border-bottom: 1px solid #526069; padding: 0 6px 0 3px; font-weight: 600; color: #cfd8dd; }
    .crumbs b { color: #f8f9fa; font-weight: 600; }
    .close { margin-left: auto; color: #f8f9fa; }
    .act { display: flex; align-items: center; margin-top: 7px; }
    .act .field { width: 219px; padding: 0 8px; gap: 9px; }
    .drop { gap: 9px; margin-left: 15px; }
    .export { margin-left: auto; width: 88px; height: 29px; gap: 8px; border-radius: 3px; background: #66adff; color: #182027; }
    .picked { font-size: 15px; line-height: 20px; height: 46px; padding: 17px 9px 0; font-weight: 400; }
    .grid { position: relative; flex: 1; min-height: 0; }
    table { width: 100%; border-collapse: collapse; table-layout: fixed; }
    .rows { height: 100%; }
    th { text-align: left; font-weight: 600; background: #273139; }
    th, td { padding: 0 0 0 5px; border-bottom: 1px solid #526069; white-space: nowrap; overflow: hidden; }
    .rows th { height: 37px; }
    .rows td { height: 29px; }
    .rows tbody tr:last-child td { border-bottom: 0; }
    .rows th:first-child, .rows td:first-child { padding-left: 15px; }
    .rows .st { border-left: 1px solid #526069; }
    .w0 { width: 46px; } .w1 { width: 150px; } .w2 { width: 140px; }
    .hot td { background: #232c34; }
    .hot td:first-child { box-shadow: inset 4px 0 #66adff; }
    .none { font-weight: 400; }
    input[type="checkbox"] { appearance: none; display: block; width: 15px; height: 15px; border: 2px solid #cfd8dd; border-radius: 2px; }
    .end { display: flex; align-items: center; gap: 11px; padding-right: 10px; }
    .end span { margin-right: auto; }
    th .end { padding-right: 15px; }
    .shade { position: absolute; right: 0; top: 66px; bottom: 0; width: 24px; background: linear-gradient(90deg, transparent, #111619 70%); }
    .hbar { height: 8px; background: #273039; border-bottom: 1px solid #526069; }
    .hbar div { height: 7px; width: 45%; border-radius: 4px; background: #53575a; }
    .pager { display: grid; grid-template-columns: 1fr auto 1fr; align-items: center; height: 39px; padding: 0 29px 8px 16px; font-weight: 400; color: #cfd8dd; }
    .pages { display: flex; align-items: center; gap: 12px; color: #dfe5e8; }
    .pages .off { color: #7f8b93; }
    .pages span { margin: 0 38px 0 32px; }
    .per { display: flex; align-items: center; justify-content: flex-end; gap: 18px; }
    .per label { display: contents; }
    .pickn { display: flex; align-items: center; gap: 10px; }
    select { appearance: none; font-size: 12px; }

    .panel { display: flex; flex-direction: column; width: 587px; border-left: 1px solid #526069; padding: 0 18px 0 17px; color: #f8f9fa; }
    .phead { display: flex; align-items: center; gap: 17px; height: 37px; padding-right: 4px; }
    .phead h2 { font-size: 15px; font-weight: 500; margin-right: auto; }
    .ptabs { display: flex; height: 29px; border-bottom: 1px solid #526069; font-weight: 600; }
    .ptabs button { padding: 0 15px; border-bottom: 4px solid transparent; }
    .ptabs .now { color: #66adff; border-color: #66adff; }
    .spec { display: flex; align-items: center; gap: 8px; margin: 19px 0 0 4px; height: 15px; }
    .tri { color: #66adff; }
    .panel b, .panel dt { font-weight: 600; }
    .panel dd, .plain { font-weight: 400; }
    .facts { display: grid; gap: 3px; padding-left: 43px; margin-top: 1px; }
    .facts div { display: flex; gap: 6px; }
    .facts .mail { gap: 32px; }
    .mail dt { width: 15px; }
    .mail dd { padding-top: 15px; flex: 1; word-break: break-all; }
    .part { border-top: 1px solid #526069; height: 57px; line-height: 56px; }
    .first { margin-top: 24px; }
    .muted { color: #8f979c; font-weight: 400; margin-left: 4px; }
    .rec { font-size: 15px; line-height: 20px; margin: -3px 0 7px; font-weight: 400; }
    .mini th { height: 37px; overflow: hidden; text-overflow: clip; }
    .mini td { height: 30px; font-weight: 400; }
    .mini th, .mini td { padding: 0; }
    .mini th:first-child, .mini td:first-child { padding: 0 0 0 22px; }
    .c1 { width: 70px; } .c2 { width: 49px; } .c3 { width: 72px; } .c5 { width: 31px; }
    .sorter { display: inline-flex; align-items: center; gap: 3px; }
    .mid { display: flex; justify-content: center; height: 27px; align-items: center; font-weight: 400; color: #cfd8dd; }
    .mid .pages { gap: 12px; color: #8f979c; }
    .mid .pages span { color: #cfd8dd; margin: 0 52px 0 40px; }
    .foot { display: flex; align-items: center; justify-content: space-between; height: 26px; padding: 0 28px 0 15px; font-weight: 400; color: #cfd8dd; }
  `];

  per(id: string) {
    return html`<div class="per"><label for=${id}>Items</label><span class="pickn"><select id=${id}><option>20</option></select>${line(DOWN, 13, 2.8)}</span></div>`;
  }

  pages(text: string) {
    return html`<div class="pages"><button class="off" aria-label="First page">${line("M6 5v14M17 6l-6 6 6 6", 13, 2)}</button><button class="off" aria-label="Previous page">${line("M15 6l-6 6 6 6", 13, 2)}</button><span>${text}</span><button aria-label="Next page">${line("M9 6l6 6-6 6", 13, 2)}</button><button aria-label="Last page">${line("M18 5v14M7 6l6 6-6 6", 13, 2)}</button></div>`;
  }

  render() {
    const sort = ico(svg`<path d="M12 1l9 8H3zM12 23l9-8H3z" fill="#cfd8dd"/>`, 9);
    return html`
      <div class="strip">
        <button class="pick" aria-label="Search tabs">${line(DOWN, 13, 3.5)}</button>
        ${browserTabs.map((t, i) => html`<div class=${classMap({ tab: true, active: !!t.active, split: i === 0 || i > 2 })}>
          ${ico(t.art, 15)}<span class=${classMap({ name: true, fade: !!t.fade })}>${t.title}</span><button aria-label="Close tab">${line(CROSS, 13, 2.5)}</button></div>`)}
        <button class="add" aria-label="New tab">${line("M12 2v20M2 12h20", 11, 2.5)}</button>
        <div class="win">
          <button aria-label="Minimize">${line("M5 12h14", 16, 1.3)}</button>
          <button aria-label="Restore">${line("M5 8h11v12H5zM9 8V4h10v12h-3", 16, 1.3)}</button>
          <button aria-label="Close">${line(CROSS, 16, 1.3)}</button>
        </div>
      </div>
      <div class="chrome">
        <div class="bar">
          <div class="moves">
            <button aria-label="Back">${line("M22 12H3M11 4l-8 8 8 8", 18, 2.5)}</button>
            <button class="dim" aria-label="Forward">${line("M2 12h19M13 4l8 8-8 8", 18, 2.5)}</button>
            <button aria-label="Reload">${line(RELOAD, 18, 2.5)}</button>
          </div>
          <div class="url">
            <button class="site" aria-label="Site information">${line("M4 7a3 3 0 1 0 6 0a3 3 0 1 0-6 0M13 7h8M3 17h8M14 17a3 3 0 1 0 6 0a3 3 0 1 0-6 0", 15, 2.4)}</button>
            <span class="addr"><b>cloud.uipath.com</b>/tudorzrwrfmb/DefaultTenant/orchestrator_/queues/1029546/transactions(sidepanel:sidepanel/transactions/541910971/details)?tid=1453580&fid=6238410&index=0&size=20&state=M4ewTgLgPgZglgUwDYBMpzSuYEG...</span>
            <button aria-label="Bookmark this page">${line("M12 2.500l2.800 6.500 7 .6-5.300 4.700 1.600 6.900-6.100-3.700-6.100 3.700 1.600-6.900L2.200 9.600l7-.6z", 17, 2)}</button>
          </div>
          <div class="exts">
            ${ico(svg`<path d="M7 0h10l7 7v10l-7 7H7l-7-7V7z" fill="#e3141c"/><path d="M7 12V7h2V5h2V4h2v1h2v2h2v8q-1 5-5 5t-6-6z" fill="#fff"/>`, 17)}
            ${ico(svg`<path d="M0 3h14v4H9v14H5V7H0zM12 9h7q5 1 5 6t-6 5l-2 0v4h-4zM16 12.500v4h2q2 0 2-2t-2-2z" fill="#ee3b3b" fill-rule="evenodd"/>`, 17)}
            ${ico(svg`<path d="M12 0q0 4 4 7l2-3q4 6 4 11 0 9-10 9T2 15q0-5 4-9l1 3q5-3 5-9z" fill="#f47b3c"/><circle cx="12" cy="16" r="7" fill="#f7a0b8"/><path d="M8 15v-1M16 15v-1M8 18q4 3 8 0" stroke="#8e2c3f" stroke-width="1.500"/>`, 17)}
            ${line("M4 5h5V3.500a2 2 0 0 1 5 0V5h5v6h1.500a2 2 0 0 1 0 4H19v6H4v-5h1.500a2.500 2.500 0 0 0 0-5H4z", 18, 2.4)}
            <span class="sep"></span>
            ${ico(svg`<circle cx="12" cy="12" r="12" fill="#3a0a08"/><path d="M3 6l9-3 9 3-9 17z" fill="#b3261a"/><path d="M7 7h10l-5 11z" fill="#f0a050"/><path d="M10 9h4l-2 5z" fill="#fff0d0"/>`, 20)}
            ${ico(svg`<circle cx="12" cy="4" r="2.500" fill="#fff"/><circle cx="12" cy="12" r="2.500" fill="#fff"/><circle cx="12" cy="20" r="2.500" fill="#fff"/>`, 15)}
          </div>
        </div>
        <div class="marks">
          ${line("M2 2h7v7H2zM15 2h7v7h-7zM2 15h7v7H2zM15 15h7v7h-7z", 15, 3)}
          <span class="sep"></span>
          ${bookmarks.map((b) => html`<a href="#">${ico(b.a, 15)}${b.t}</a>`)}
          <span class="sep all"></span>
          <a href="#">${line(FOLDER, 18, 1.8)}All Bookmarks</a>
        </div>
      </div>
      <div class="app">
        <header class="top">
          <button aria-label="Apps">${solid("M1 1h5v5H1zM9.500 1h5v5h-5zM18 1h5v5h-5zM1 9.500h5v5H1zM9.500 9.500h5v5h-5zM18 9.500h5v5h-5zM1 18h5v5H1zM9.500 18h5v5h-5zM18 18h5v5h-5z", 16)}</button>
          <div class="brand">${ico(uiFav, 20)}<span class="path">Path</span>Orchestrator</div>
          <span class="bar1"></span>
          <div class="tools">
            ${line(LENS, 21, 2.4)}
            ${line("M3 2.500h18v19H3zM12 7v10M7 12h10", 21, 2.4)}
            ${line("M4 2.500h10.500L20 8v13.500H4zM14 3v6h6M8 13h8M8 17h8", 21, 2.2)}
            ${line("M3 2.500h18M3 7.500h18M3.500 8v14h4M20.500 8v14h-4M12 11v2M12 18v2.500M8 13.500l2 1M14 17l2 1M8 18l2-1M14 14.500l2-1M12 13a2.700 2.700 0 1 0 0 5.400a2.700 2.700 0 1 0 0-5.400", 21, 2)}
            <span class="bar1"></span>
            ${line("M12 2a10 10 0 1 0 0 20a10 10 0 1 0 0-20M9 9.500q.3-3 3-3t3 2.700q0 1.500-1.500 2.500T12 14.500M12 16v2.300", 22, 2)}
            <span class="bell">${line("M12 3.500a6 6 0 0 0-6 6V17H18V9.500a6 6 0 0 0-6-6zM3 17.500h18M10 21h4M12 1v3", 22, 2)}<span class="badge">2</span></span>
            <button class="me">IL</button>
          </div>
        </header>
        <div class="work">
          <nav class="side">
            <a href="#" class="tenant">${ico(svg`<circle cx="12" cy="12" r="10" stroke="#cfd8dd" stroke-width="2"/><path d="M3 9l6 6v2l3 4q-8 0-10-9zM9 3l8-1 4 6-1 9-3-3h-3l-1-3H9V8l3-1z" fill="#cfd8dd"/>`, 16)}Tenant</a>
            <div class="mine">${line(FOLDER, 17, 2.2)}My Folders</div>
            <label class="field">${line(LENS, 16, 2.8)}<input type="search" placeholder="Search" aria-label="Search folders" /></label>
            <a href="#" class="item">${ico(svg`<path d="M3 5h6l2 2.500h10v12H3z" stroke="#4fae45" stroke-width="2"/><path d="M15 9.500l1 2.500h3l-2.200 2 .8 3-2.600-1.700-2.600 1.700.8-3L11 12h3z" fill="#4fae45"/>`, 17)}My Workspace</a>
            <a href="#" class="item cur">${line(FOLDER, 17, 2.2)}RPA</a>
            <a href="#" class="item">${line(FOLDER, 17, 2.2)}Shared</a>
          </nav>
          <main class="main">
            <div class="crumbs"><a href="#">RPA</a>${line(RIGHT, 14, 3)}<a href="#">Queues</a>${line(RIGHT, 14, 3)}<b>Transactions: InvoiceExtractor_Queue</b><button class="close" aria-label="Close">${line(CROSS, 14, 2.8)}</button></div>
            <div class="act">
              <label class="field">${line(LENS, 16, 2.2)}<input type="search" placeholder="Search" aria-label="Search transactions" /></label>
              <button class="drop" aria-label="Columns">${line("M3 3h18v18H3zM3 8h18M9 9v12M15 9v12", 17, 2.6)}${line(DOWN, 13, 3.2)}</button>
              <span class="bar1"></span>
              <button class="drop" aria-label="Filters">${line("M3 6h18M7 12h10M10 18h4", 17, 2.4)}${line(DOWN, 13, 3.2)}</button>
              <button class="export">${solid("M9 2h6v7h5l-8 8-8-8h5zM3 19h18v2.500H3z", 14)}Export</button>
            </div>
            <div class="picked">0 rows selected</div>
            <div class="grid">
              <table class="rows">
                <colgroup><col class="w0" /><col /><col class="w1" /><col class="w1" /><col class="w2" /></colgroup>
                <thead><tr><th><input type="checkbox" aria-label="Select all" /></th><th>Reference</th><th class="st">Status</th><th>Revision</th><th><div class="end"><span>Priority</span>${line(RELOAD, 16, 2.8)}</div></th></tr></thead>
                <tbody>
                  ${refs.map(([r, s], i) => html`<tr class=${i === 0 ? "hot" : ""}>
                    <td><input type="checkbox" aria-label="Select row" /></td><td>Black and White Simple ${r}</td><td class="st">${s}</td><td class="none">None</td>
                    <td>${i === 0 ? html`<div class="end"><span>Normal</span>${line("M12 2a10 10 0 1 0 0 20a10 10 0 1 0 0-20M12 10v7M12 6.500v2", 14, 2)}${ico(svg`<circle cx="12" cy="4" r="2.500" fill="#fff"/><circle cx="12" cy="12" r="2.500" fill="#fff"/><circle cx="12" cy="20" r="2.500" fill="#fff"/>`, 15)}</div>` : "Normal"}</td></tr>`)}
                </tbody>
              </table>
              <div class="shade"></div>
            </div>
            <div class="hbar"><div></div></div>
            <div class="pager"><span>1 - 20 / 40</span>${this.pages("Page 1 / 2")}${this.per("per-main")}</div>
          </main>
          <aside class="panel">
            <div class="phead"><h2>a310c168-7198-41b2-ac6d-0a3fd92fc8d7</h2>
              <button aria-label="Expand">${line("M4 9V4h5M15 4h5v5M20 15v5h-5M9 20H4v-5", 14, 3)}</button><button aria-label="Close panel">${line(CROSS, 14, 2.6)}</button></div>
            <div class="ptabs"><button class="now">Details</button><button>Comments</button><button>History</button></div>
            <div class="spec"><span class="tri">${line(DOWN, 14, 3)}</span><b>Specific Data:</b><span class="plain">Object</span></div>
            <dl class="facts">
              <div class="mail"><dt>Email ID:</dt><dd>&lt;DB3PR10MB6905D7F562A4D95BEE903EE8BB112@DB3PR10MB6905.EURPRD10.PROD.OUTLOOK.COM&gt;</dd></div>
              ${facts.map(([k, v]) => html`<div><dt>${k}</dt><dd>${v}</dd></div>`)}
            </dl>
            <div class="part first"><b>Output Data:</b> <span class="muted">Empty</span></div>
            <div class="part"><b>Analytics Data:</b> <span class="muted">Empty</span></div>
            <p class="rec">Recording: False</p>
            <table class="mini">
              <colgroup><col class="c1" /><col class="c2" /><col class="c2" /><col class="c2" /><col class="c2" /><col class="c3" /><col class="c3" /><col class="c2" /><col /><col class="c5" /></colgroup>
              <thead><tr><th>Status</th><th>Revis..</th><th>Dead..</th><th>Retry..</th><th>Post...</th>
                <th><span class="sorter">Started ${sort}</span></th><th><span class="sorter">Ended ${sort}</span></th><th><span class="sorter">Ro... ${sort}</span></th><th>Exce...</th><th>${line(RELOAD, 16, 2.8)}</th></tr></thead>
              <tbody><tr><td>New</td><td>No...</td><td></td><td>0</td><td></td><td></td><td></td><td></td><td></td><td></td></tr></tbody>
            </table>
            <div class="mid">${this.pages("Page 1")}</div>
            <div class="foot"><span>1 - 20 / 0</span>${this.per("per-side")}</div>
          </aside>
        </div>
      </div>
      <task-bar></task-bar>`;
  }
}

@customElement("app-root")
class AppRoot extends LitElement {
  static styles = css`
    :host { display: grid; grid-template-columns: 4fr 3fr; grid-template-rows: 5fr 27fr 4fr; height: 100vh; background: #000; overflow: hidden; }
    outlook-window { grid-row: 1 / -1; min-width: 0; }
    browser-window { grid-row: 2; grid-column: 2; min-width: 0; }
  `;

  render() {
    return html`<outlook-window></outlook-window><browser-window></browser-window>`;
  }
}
